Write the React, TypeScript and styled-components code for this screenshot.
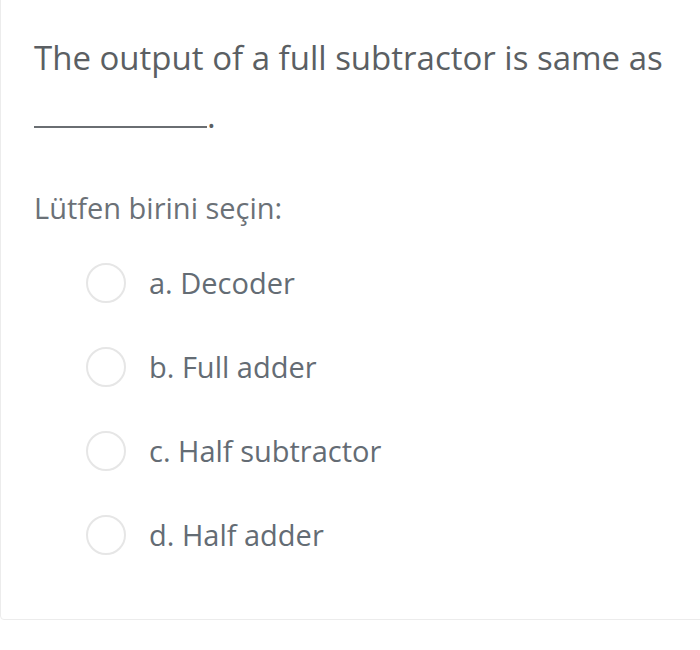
import * as React from 'react'
import styled, { createGlobalStyle } from 'styled-components'

const GlobalStyle = createGlobalStyle`
  html, body {
    margin: 0;
    padding: 0;
    background: #ffffff;
  }
  body {
    font-family: "Open Sans", "Noto Sans", sans-serif;
  }
`;

const Card = styled.div`
  width: 720px;
  height: 640px;
  box-sizing: border-box;
  margin-top: -20px;
  padding: 20px 0 0 33px;
  border: 1.5px solid #ececec;
  border-radius: 4px;
  background: #fff;
`;

const Question = styled.div`
  margin-top: 29px;
  font-size: 33px;
  line-height: 56px;
  color: #5b5f63;
  width: 660px;
`;

const Blank = styled.span`
  display: inline-block;
  width: 173px;
  height: 40px;
  border-bottom: 2px solid #6a6e72;
  vertical-align: baseline;
`;

const Prompt = styled.div`
  margin-top: 46px;
  font-size: 29px;
  line-height: 36px;
  color: #6b7177;
`;

const Options = styled.div`
  display: flex;
  flex-direction: column;
  gap: 44px;
  margin-top: 37px;
  padding-left: 52px;
`;

const Option = styled.label`
  display: flex;
  align-items: center;
  gap: 23px;
  font-size: 29px;
  line-height: 40px;
  color: #646c74;
`;

const Radio = styled.span`
  flex: none;
  width: 40px;
  height: 40px;
  box-sizing: border-box;
  border-radius: 50%;
  border: 2px solid #e6e6e6;
`;

const options = ['a. Decoder', 'b. Full adder', 'c. Half subtractor', 'd. Half adder']

export default function App() {
  return (
    <>
      <GlobalStyle />
      <Card>
        <Question>
          The output of a full subtractor is same as <Blank />.
        </Question>
        <Prompt>Lütfen birini seçin:</Prompt>
        <Options>
          {options.map(o => (
            <Option key={o}>
              <Radio />
              <span>{o}</span>
            </Option>
          ))}
        </Options>
      </Card>
    </>
  )
}
